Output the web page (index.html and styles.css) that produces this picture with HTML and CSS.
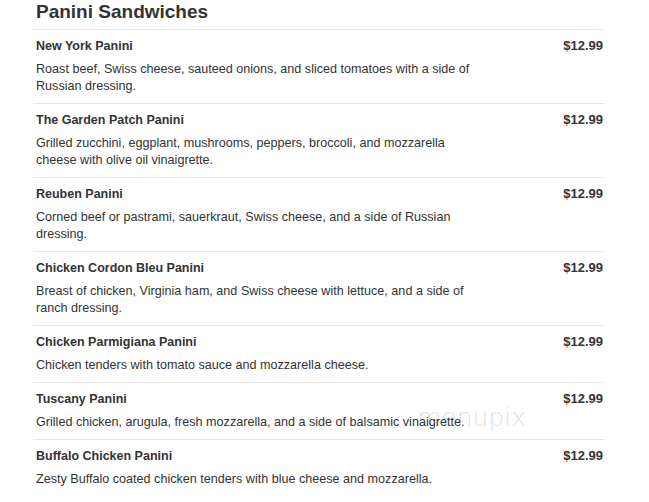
FILE: index.html
```html
<!DOCTYPE html>
<html>
<head>
<meta charset="utf-8">
<link rel="stylesheet" href="styles.css">
</head>
<body>
<div class="menu">
  <h2 class="section-title">Panini Sandwiches</h2>
  <div class="item">
    <div class="info">
      <div class="name">New York Panini</div>
      <div class="desc">Roast beef, Swiss cheese, sauteed onions, and sliced tomatoes with a side of Russian dressing.</div>
    </div>
    <div class="price">$12.99</div>
  </div>
  <div class="item">
    <div class="info">
      <div class="name">The Garden Patch Panini</div>
      <div class="desc">Grilled zucchini, eggplant, mushrooms, peppers, broccoli, and mozzarella cheese with olive oil vinaigrette.</div>
    </div>
    <div class="price">$12.99</div>
  </div>
  <div class="item">
    <div class="info">
      <div class="name">Reuben Panini</div>
      <div class="desc">Corned beef or pastrami, sauerkraut, Swiss cheese, and a side of Russian dressing.</div>
    </div>
    <div class="price">$12.99</div>
  </div>
  <div class="item">
    <div class="info">
      <div class="name">Chicken Cordon Bleu Panini</div>
      <div class="desc">Breast of chicken, Virginia ham, and Swiss cheese with lettuce, and a side of ranch dressing.</div>
    </div>
    <div class="price">$12.99</div>
  </div>
  <div class="item">
    <div class="info">
      <div class="name">Chicken Parmigiana Panini</div>
      <div class="desc">Chicken tenders with tomato sauce and mozzarella cheese.</div>
    </div>
    <div class="price">$12.99</div>
  </div>
  <div class="item">
    <div class="info">
      <div class="name">Tuscany Panini</div>
      <div class="desc">Grilled chicken, arugula, fresh mozzarella, and a side of balsamic vinaigrette.</div>
    </div>
    <div class="price">$12.99</div>
    <div class="watermark">menupix</div>
  </div>
  <div class="item">
    <div class="info">
      <div class="name">Buffalo Chicken Panini</div>
      <div class="desc">Zesty Buffalo coated chicken tenders with blue cheese and mozzarella.</div>
    </div>
    <div class="price">$12.99</div>
  </div>
</div>
</body>
</html>
```

FILE: styles.css
```css
html, body {
  margin: 0;
  padding: 0;
  background: #ffffff;
}
body {
  font-family: "Liberation Sans", Arial, sans-serif;
  color: #333333;
}
.menu {
  width: 572px;
  margin-left: 33px;
}
.section-title {
  margin: 0;
  padding: 0 0 0 3px;
  font-size: 19px;
  line-height: 23px;
  height: 29px;
  font-weight: bold;
  color: #333333;
}
.item {
  position: relative;
  display: flex;
  justify-content: space-between;
  align-items: flex-start;
  border-top: 1px solid #e6e6e6;
  padding: 7px 2px 8px 3px;
}
.info {
  display: flex;
  flex-direction: column;
  gap: 6px;
}
.name {
  font-size: 12.5px;
  line-height: 18px;
  font-weight: bold;
  color: #333333;
}
.desc {
  font-size: 12.6px;
  line-height: 17px;
  max-width: 442px;
  color: #333333;
}
.price {
  font-size: 13px;
  line-height: 18px;
  font-weight: bold;
  color: #333333;
}
.watermark {
  position: absolute;
  left: 384px;
  top: 20px;
  font-family: "DejaVu Sans", sans-serif;
  font-weight: 200;
  font-size: 25px;
  line-height: 30px;
  color: rgba(0, 0, 0, 0.15);
  pointer-events: none;
}
```
